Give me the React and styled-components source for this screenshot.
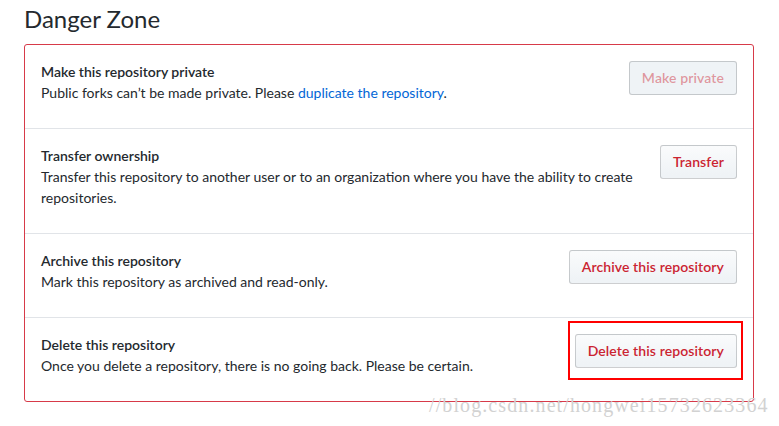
import React from 'react';
import styled, { createGlobalStyle } from 'styled-components';

const Global = createGlobalStyle`
  html, body {
    margin: 0;
    padding: 0;
    background: #fff;
  }
  body {
    font-family: "Segoe UI", Lato, "Noto Sans", "Liberation Sans", sans-serif;
    font-size: 14px;
    line-height: 1.5;
    color: #24292e;
  }
`;

const Page = styled.div`
  position: relative;
  width: 730px;
  min-height: 422px;
  padding: 4px 25px 0 24px;
`;

const Heading = styled.h2`
  margin: 0 0 10px;
  font-size: 24px;
  font-weight: 400;
  line-height: 30px;
`;

const Box = styled.div`
  border: 1px solid #d73a49;
  border-radius: 3px;
`;

const Row = styled.div`
  display: flex;
  align-items: flex-start;
  gap: 16px;
  padding: 16px;
  border-top: ${(p) => (p.first ? 'none' : '1px solid #e1e4e8')};
`;

const Info = styled.div`
  flex: 1;
  min-width: 0;
`;

const Title = styled.div`
  font-weight: 600;
  line-height: 21px;
`;

const Desc = styled.p`
  margin: 0 0 9px;
  line-height: 21px;
`;

const Link = styled.a`
  color: #0366d6;
  text-decoration: none;
`;

const Button = styled.button`
  position: relative;
  flex: none;
  font: inherit;
  font-weight: 600;
  font-size: 14px;
  line-height: 20px;
  letter-spacing: 0.1px;
  padding: 6px 12px;
  border: 1px solid rgba(27, 31, 35, 0.2);
  border-radius: 3px;
  color: ${(p) => (p.disabled ? 'rgba(203, 36, 49, 0.45)' : '#cb2431')};
  background: ${(p) =>
    p.disabled ? '#eff3f6' : 'linear-gradient(-180deg, #fafbfc 0%, #eff3f6 90%)'};
  cursor: ${(p) => (p.disabled ? 'default' : 'pointer')};
`;

const Highlight = styled.span`
  position: absolute;
  left: -8px;
  top: -14px;
  right: -7px;
  bottom: -13px;
  border: 2px solid #ff0000;
  pointer-events: none;
`;

const Watermark = styled.div`
  position: absolute;
  left: 429px;
  top: 393px;
  font-family: "Liberation Serif", "DejaVu Serif", serif;
  font-size: 20px;
  line-height: 24px;
  letter-spacing: 1.1px;
  color: #d2d2d2;
  white-space: nowrap;
  pointer-events: none;
`;

export default function App() {
  return (
    <>
      <Global />
      <Page>
        <Heading>Danger Zone</Heading>
        <Box>
          <Row first>
            <Info>
              <Title>Make this repository private</Title>
              <Desc>
                Public forks can’t be made private. Please{' '}
                <Link href="#">duplicate the repository</Link>.
              </Desc>
            </Info>
            <Button disabled>Make private</Button>
          </Row>
          <Row>
            <Info>
              <Title>Transfer ownership</Title>
              <Desc>
                Transfer this repository to another user or to an organization where you have the
                ability to create repositories.
              </Desc>
            </Info>
            <Button>Transfer</Button>
          </Row>
          <Row>
            <Info>
              <Title>Archive this repository</Title>
              <Desc>Mark this repository as archived and read-only.</Desc>
            </Info>
            <Button>Archive this repository</Button>
          </Row>
          <Row>
            <Info>
              <Title>Delete this repository</Title>
              <Desc>Once you delete a repository, there is no going back. Please be certain.</Desc>
            </Info>
            <Button>
              Delete this repository
              <Highlight />
            </Button>
          </Row>
        </Box>
        <Watermark>//blog.csdn.net/hongwei15732623364</Watermark>
      </Page>
    </>
  );
}
